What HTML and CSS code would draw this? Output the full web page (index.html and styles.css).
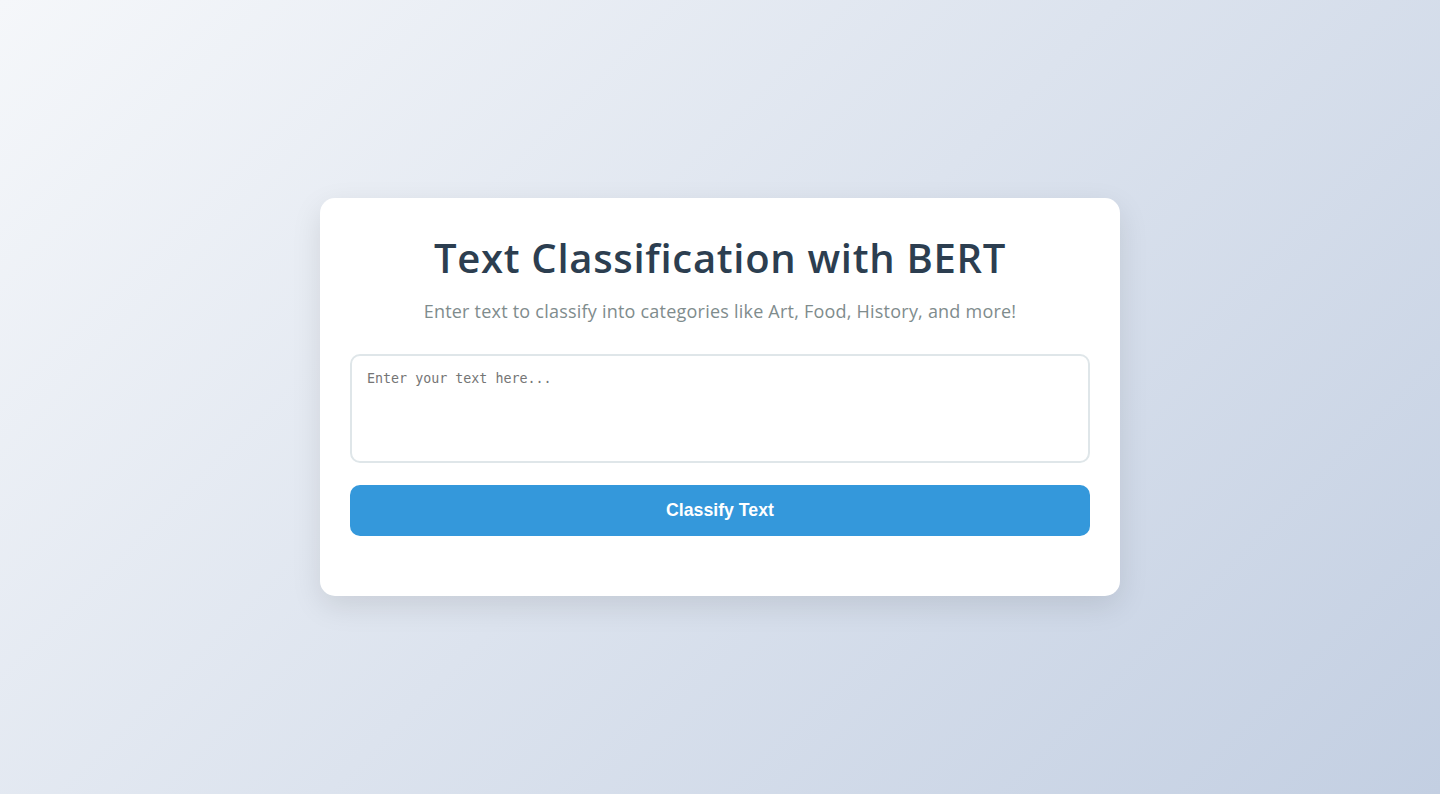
FILE: index.html
```html
<!DOCTYPE html>
<html lang="en">
<head>
<meta charset="UTF-8">
<title>Text Classification with BERT</title>
<link rel="stylesheet" href="styles.css">
</head>
<body>
<div class="page">
  <div class="card">
    <h1 class="title">Text Classification with BERT</h1>
    <p class="subtitle">Enter text to classify into categories like Art, Food, History, and more!</p>
    <textarea class="input" placeholder="Enter your text here..."></textarea>
    <button class="btn" type="button">Classify Text</button>
  </div>
</div>
</body>
</html>
```

FILE: styles.css
```css
* { box-sizing: border-box; }
html, body { margin: 0; padding: 0; }
body {
  font-family: "Open Sans", "Noto Sans", sans-serif;
  background: linear-gradient(135deg, #f5f7fa 0%, #c3cfe2 100%);
  min-height: 794px;
}
.page {
  min-height: 794px;
  display: flex;
  align-items: center;
  justify-content: center;
}
.card {
  width: 800px;
  background: #ffffff;
  border-radius: 15px;
  padding: 30px 30px 60px;
  box-shadow: 0 10px 30px rgba(0, 0, 0, 0.1);
  display: flex;
  flex-direction: column;
}
.title {
  margin: 0 0 10px;
  font-size: 40px;
  line-height: 60px;
  font-weight: 600;
  letter-spacing: 0.7px;
  color: #2c3e50;
  text-align: center;
}
.subtitle {
  margin: 0 0 29px;
  font-size: 18px;
  line-height: 27px;
  letter-spacing: 0.22px;
  color: #7f8c8d;
  text-align: center;
}
.input {
  display: block;
  width: 100%;
  height: 109px;
  padding: 15px;
  border: 2px solid #dfe6e9;
  border-radius: 10px;
  font-family: "DejaVu Sans Mono", monospace;
  font-size: 13.333px;
  resize: none;
  margin: 0 0 22px;
  outline: none;
}
.input::placeholder { color: #757575; }
.btn {
  display: block;
  width: 100%;
  height: 51px;
  border: none;
  border-radius: 10px;
  background: #3498db;
  color: #ffffff;
  font-family: "Liberation Sans", Arial, sans-serif;
  font-weight: 700;
  font-size: 17.7px;
  cursor: pointer;
}
```
